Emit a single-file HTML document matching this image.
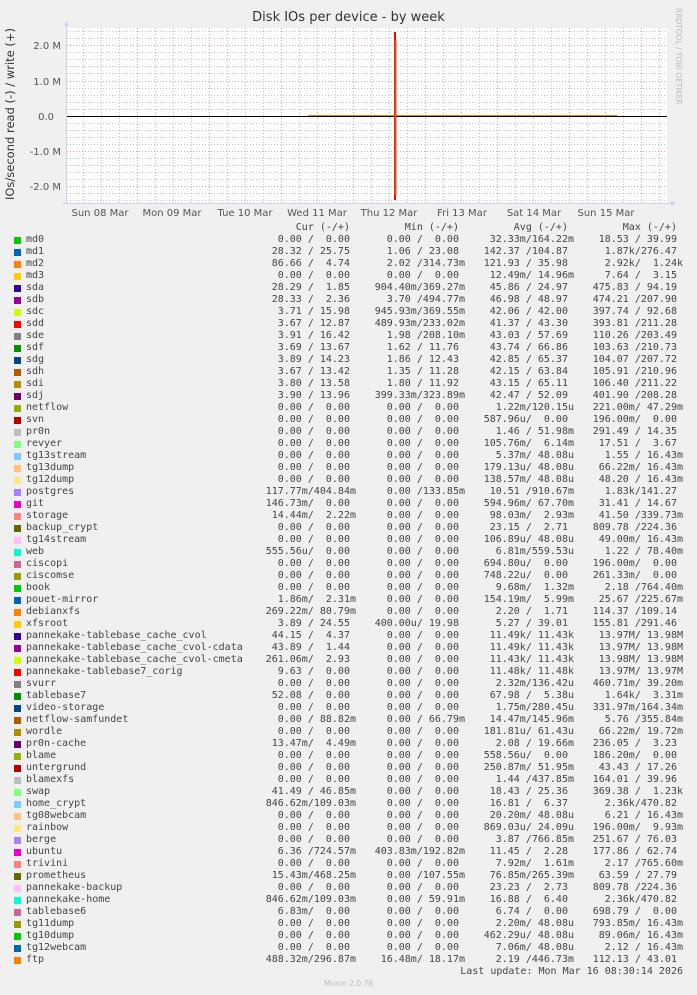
<!DOCTYPE html>
<html><head><meta charset="utf-8"><style>
body{margin:0;width:697px;height:995px;background:#f0f0f0;position:relative;overflow:hidden;font-family:"DejaVu Sans Mono","Liberation Mono",monospace;}
.t{position:absolute;font-family:"DejaVu Sans","Liberation Sans",sans-serif;color:#444}
.r{position:absolute;left:0;height:12px;width:697px;font-size:10px;line-height:12px;color:#444;white-space:pre}
.r i{position:absolute;left:14px;top:3px;width:7px;height:7px}
.r b{position:absolute;left:26px;font-weight:normal}
.r s{position:absolute;text-decoration:none;width:100px;text-align:right}
.a{left:256px}.b{left:365px}.c{left:474px}.d{left:583px}
</style></head><body>
<div class="t" style="left:0;width:697px;text-align:center;top:10px;font-size:13px;color:#333">Disk IOs per device - by week</div>
<div class="t" style="left:-80px;top:107px;width:180px;text-align:center;transform:rotate(-90deg);font-size:11.5px;color:#333">IOs/second read (-) / write (+)</div>
<div class="t" style="left:674px;top:8px;writing-mode:vertical-rl;font-size:7.5px;color:#bbb">RRDTOOL / TOBI OETIKER</div>
<svg width="697" height="225" style="position:absolute;left:0;top:0" font-family="DejaVu Sans,Liberation Sans,sans-serif" font-size="10" fill="#555">
<rect x="67" y="28" width="600" height="175" fill="#fff"/>
<g stroke="#c8c8c8" stroke-dasharray="1,2" stroke-width="1">
<path d="M67 31.5H667M67 38.5H667M67 52.5H667M67 59.5H667M67 66.5H667M67 73.5H667M67 88.5H667M67 95.5H667M67 102.5H667M67 109.5H667M67 123.5H667M67 130.5H667M67 137.5H667M67 144.5H667M67 158.5H667M67 165.5H667M67 172.5H667M67 179.5H667M67 193.5H667M67 200.5H667"/>
<path d="M83.5 28V203M101.5 28V203M119.5 28V203M155.5 28V203M173.5 28V203M191.5 28V203M227.5 28V203M245.5 28V203M263.5 28V203M299.5 28V203M317.5 28V203M335.5 28V203M371.5 28V203M389.5 28V203M407.5 28V203M443.5 28V203M461.5 28V203M479.5 28V203M515.5 28V203M533.5 28V203M551.5 28V203M587.5 28V203M605.5 28V203M623.5 28V203M659.5 28V203"/>
</g>
<g stroke="#e8a0a0" stroke-dasharray="1,2" stroke-width="1">
<path d="M67 45.5H667M67 81.5H667M67 151.5H667M67 186.5H667"/>
<path d="M137.5 28V203M209.5 28V203M281.5 28V203M353.5 28V203M425.5 28V203M497.5 28V203M569.5 28V203M641.5 28V203"/>
</g>
<path d="M66.5 24V204M62 203.5H671" stroke="#ccd4f0" stroke-width="1"/>
<path d="M64 26L66.5 21L69 26Z M671 201L676 203.5L671 206Z" fill="#ccd4f0"/>
<path d="M67 116.5H667" stroke="#000" stroke-width="1"/>
<path d="M308 115.5H617" stroke="#ff8000" stroke-width="1"/>
<path d="M395 32V200" stroke="#ff0000" stroke-width="2"/>
<path d="M395.5 40V195" stroke="#d05030" stroke-width="2"/>
<g text-anchor="end"><text x="61" y="49">2.0 M</text><text x="61" y="85">1.0 M</text><text x="54" y="120">0.0</text><text x="61" y="155">-1.0 M</text><text x="61" y="190">-2.0 M</text></g>
<g text-anchor="middle"><text x="100" y="216">Sun 08 Mar</text><text x="172" y="216">Mon 09 Mar</text><text x="245" y="216">Tue 10 Mar</text><text x="317" y="216">Wed 11 Mar</text><text x="389" y="216">Thu 12 Mar</text><text x="462" y="216">Fri 13 Mar</text><text x="534" y="216">Sat 14 Mar</text><text x="606" y="216">Sun 15 Mar</text></g>
</svg>
<div class="r" style="top:222px"><s class="a">Cur (-/+) </s><s class="b">Min (-/+) </s><s class="c">Avg (-/+) </s><s class="d">Max (-/+) </s></div>
<div class="r" style="top:234px"><i style="background:#00CC00"></i><b>md0</b><s class="a">0.00 /  0.00 </s><s class="b">0.00 /  0.00 </s><s class="c">32.33m/164.22m</s><s class="d">18.53 / 39.99 </s></div>
<div class="r" style="top:246px"><i style="background:#0066B3"></i><b>md1</b><s class="a">28.32 / 25.75 </s><s class="b">1.06 / 23.08 </s><s class="c">142.37 /104.87 </s><s class="d">1.87k/276.47 </s></div>
<div class="r" style="top:258px"><i style="background:#FF8000"></i><b>md2</b><s class="a">86.66 /  4.74 </s><s class="b">2.02 /314.73m</s><s class="c">121.93 / 35.98 </s><s class="d">2.92k/  1.24k</s></div>
<div class="r" style="top:270px"><i style="background:#FFCC00"></i><b>md3</b><s class="a">0.00 /  0.00 </s><s class="b">0.00 /  0.00 </s><s class="c">12.49m/ 14.96m</s><s class="d">7.64 /  3.15 </s></div>
<div class="r" style="top:282px"><i style="background:#330099"></i><b>sda</b><s class="a">28.29 /  1.85 </s><s class="b">904.40m/369.27m</s><s class="c">45.86 / 24.97 </s><s class="d">475.83 / 94.19 </s></div>
<div class="r" style="top:294px"><i style="background:#990099"></i><b>sdb</b><s class="a">28.33 /  2.36 </s><s class="b">3.70 /494.77m</s><s class="c">46.98 / 48.97 </s><s class="d">474.21 /207.90 </s></div>
<div class="r" style="top:306px"><i style="background:#CCFF00"></i><b>sdc</b><s class="a">3.71 / 15.98 </s><s class="b">945.93m/369.55m</s><s class="c">42.06 / 42.00 </s><s class="d">397.74 / 92.68 </s></div>
<div class="r" style="top:318px"><i style="background:#FF0000"></i><b>sdd</b><s class="a">3.67 / 12.87 </s><s class="b">489.93m/233.02m</s><s class="c">41.37 / 43.30 </s><s class="d">393.81 /211.28 </s></div>
<div class="r" style="top:330px"><i style="background:#808080"></i><b>sde</b><s class="a">3.91 / 16.42 </s><s class="b">1.98 /208.10m</s><s class="c">43.03 / 57.69 </s><s class="d">110.26 /203.49 </s></div>
<div class="r" style="top:342px"><i style="background:#008F00"></i><b>sdf</b><s class="a">3.69 / 13.67 </s><s class="b">1.62 / 11.76 </s><s class="c">43.74 / 66.86 </s><s class="d">103.63 /210.73 </s></div>
<div class="r" style="top:354px"><i style="background:#00487D"></i><b>sdg</b><s class="a">3.89 / 14.23 </s><s class="b">1.86 / 12.43 </s><s class="c">42.85 / 65.37 </s><s class="d">104.07 /207.72 </s></div>
<div class="r" style="top:366px"><i style="background:#B35A00"></i><b>sdh</b><s class="a">3.67 / 13.42 </s><s class="b">1.35 / 11.28 </s><s class="c">42.15 / 63.84 </s><s class="d">105.91 /210.96 </s></div>
<div class="r" style="top:378px"><i style="background:#B38F00"></i><b>sdi</b><s class="a">3.80 / 13.58 </s><s class="b">1.80 / 11.92 </s><s class="c">43.15 / 65.11 </s><s class="d">106.40 /211.22 </s></div>
<div class="r" style="top:390px"><i style="background:#6B006B"></i><b>sdj</b><s class="a">3.90 / 13.96 </s><s class="b">399.33m/323.89m</s><s class="c">42.47 / 52.09 </s><s class="d">401.90 /208.28 </s></div>
<div class="r" style="top:402px"><i style="background:#8FB300"></i><b>netflow</b><s class="a">0.00 /  0.00 </s><s class="b">0.00 /  0.00 </s><s class="c">1.22m/120.15u</s><s class="d">221.00m/ 47.29m</s></div>
<div class="r" style="top:414px"><i style="background:#B30000"></i><b>svn</b><s class="a">0.00 /  0.00 </s><s class="b">0.00 /  0.00 </s><s class="c">587.96u/  0.00 </s><s class="d">196.00m/  0.00 </s></div>
<div class="r" style="top:426px"><i style="background:#BEBEBE"></i><b>pr0n</b><s class="a">0.00 /  0.00 </s><s class="b">0.00 /  0.00 </s><s class="c">1.46 / 51.98m</s><s class="d">291.49 / 14.35 </s></div>
<div class="r" style="top:438px"><i style="background:#80FF80"></i><b>revyer</b><s class="a">0.00 /  0.00 </s><s class="b">0.00 /  0.00 </s><s class="c">105.76m/  6.14m</s><s class="d">17.51 /  3.67 </s></div>
<div class="r" style="top:450px"><i style="background:#80C9FF"></i><b>tg13stream</b><s class="a">0.00 /  0.00 </s><s class="b">0.00 /  0.00 </s><s class="c">5.37m/ 48.08u</s><s class="d">1.55 / 16.43m</s></div>
<div class="r" style="top:462px"><i style="background:#FFC080"></i><b>tg13dump</b><s class="a">0.00 /  0.00 </s><s class="b">0.00 /  0.00 </s><s class="c">179.13u/ 48.08u</s><s class="d">66.22m/ 16.43m</s></div>
<div class="r" style="top:474px"><i style="background:#FFE680"></i><b>tg12dump</b><s class="a">0.00 /  0.00 </s><s class="b">0.00 /  0.00 </s><s class="c">138.57m/ 48.08u</s><s class="d">48.20 / 16.43m</s></div>
<div class="r" style="top:486px"><i style="background:#AA80FF"></i><b>postgres</b><s class="a">117.77m/404.84m</s><s class="b">0.00 /133.85m</s><s class="c">10.51 /910.67m</s><s class="d">1.83k/141.27 </s></div>
<div class="r" style="top:498px"><i style="background:#EE00CC"></i><b>git</b><s class="a">146.73m/  0.00 </s><s class="b">0.00 /  0.00 </s><s class="c">594.96m/ 67.70m</s><s class="d">31.41 / 14.67 </s></div>
<div class="r" style="top:510px"><i style="background:#FF8080"></i><b>storage</b><s class="a">14.44m/  2.22m</s><s class="b">0.00 /  0.00 </s><s class="c">98.03m/  2.93m</s><s class="d">41.50 /339.73m</s></div>
<div class="r" style="top:522px"><i style="background:#666600"></i><b>backup_crypt</b><s class="a">0.00 /  0.00 </s><s class="b">0.00 /  0.00 </s><s class="c">23.15 /  2.71 </s><s class="d">809.78 /224.36 </s></div>
<div class="r" style="top:534px"><i style="background:#FFBFFF"></i><b>tg14stream</b><s class="a">0.00 /  0.00 </s><s class="b">0.00 /  0.00 </s><s class="c">106.89u/ 48.08u</s><s class="d">49.00m/ 16.43m</s></div>
<div class="r" style="top:546px"><i style="background:#00FFCC"></i><b>web</b><s class="a">555.56u/  0.00 </s><s class="b">0.00 /  0.00 </s><s class="c">6.81m/559.53u</s><s class="d">1.22 / 78.40m</s></div>
<div class="r" style="top:558px"><i style="background:#CC6699"></i><b>ciscopi</b><s class="a">0.00 /  0.00 </s><s class="b">0.00 /  0.00 </s><s class="c">694.80u/  0.00 </s><s class="d">196.00m/  0.00 </s></div>
<div class="r" style="top:570px"><i style="background:#999900"></i><b>ciscomse</b><s class="a">0.00 /  0.00 </s><s class="b">0.00 /  0.00 </s><s class="c">748.22u/  0.00 </s><s class="d">261.33m/  0.00 </s></div>
<div class="r" style="top:582px"><i style="background:#00CC00"></i><b>book</b><s class="a">0.00 /  0.00 </s><s class="b">0.00 /  0.00 </s><s class="c">9.68m/  1.32m</s><s class="d">2.18 /764.40m</s></div>
<div class="r" style="top:594px"><i style="background:#0066B3"></i><b>pouet-mirror</b><s class="a">1.86m/  2.31m</s><s class="b">0.00 /  0.00 </s><s class="c">154.19m/  5.99m</s><s class="d">25.67 /225.67m</s></div>
<div class="r" style="top:606px"><i style="background:#FF8000"></i><b>debianxfs</b><s class="a">269.22m/ 80.79m</s><s class="b">0.00 /  0.00 </s><s class="c">2.20 /  1.71 </s><s class="d">114.37 /109.14 </s></div>
<div class="r" style="top:618px"><i style="background:#FFCC00"></i><b>xfsroot</b><s class="a">3.89 / 24.55 </s><s class="b">400.00u/ 19.98 </s><s class="c">5.27 / 39.01 </s><s class="d">155.81 /291.46 </s></div>
<div class="r" style="top:630px"><i style="background:#330099"></i><b>pannekake-tablebase_cache_cvol</b><s class="a">44.15 /  4.37 </s><s class="b">0.00 /  0.00 </s><s class="c">11.49k/ 11.43k</s><s class="d">13.97M/ 13.98M</s></div>
<div class="r" style="top:642px"><i style="background:#990099"></i><b>pannekake-tablebase_cache_cvol-cdata</b><s class="a">43.89 /  1.44 </s><s class="b">0.00 /  0.00 </s><s class="c">11.49k/ 11.43k</s><s class="d">13.97M/ 13.98M</s></div>
<div class="r" style="top:654px"><i style="background:#CCFF00"></i><b>pannekake-tablebase_cache_cvol-cmeta</b><s class="a">261.06m/  2.93 </s><s class="b">0.00 /  0.00 </s><s class="c">11.43k/ 11.43k</s><s class="d">13.98M/ 13.98M</s></div>
<div class="r" style="top:666px"><i style="background:#FF0000"></i><b>pannekake-tablebase7_corig</b><s class="a">9.63 /  0.00 </s><s class="b">0.00 /  0.00 </s><s class="c">11.48k/ 11.48k</s><s class="d">13.97M/ 13.97M</s></div>
<div class="r" style="top:678px"><i style="background:#808080"></i><b>svurr</b><s class="a">0.00 /  0.00 </s><s class="b">0.00 /  0.00 </s><s class="c">2.32m/136.42u</s><s class="d">460.71m/ 39.20m</s></div>
<div class="r" style="top:690px"><i style="background:#008F00"></i><b>tablebase7</b><s class="a">52.08 /  0.00 </s><s class="b">0.00 /  0.00 </s><s class="c">67.98 /  5.38u</s><s class="d">1.64k/  3.31m</s></div>
<div class="r" style="top:702px"><i style="background:#00487D"></i><b>video-storage</b><s class="a">0.00 /  0.00 </s><s class="b">0.00 /  0.00 </s><s class="c">1.75m/280.45u</s><s class="d">331.97m/164.34m</s></div>
<div class="r" style="top:714px"><i style="background:#B35A00"></i><b>netflow-samfundet</b><s class="a">0.00 / 88.82m</s><s class="b">0.00 / 66.79m</s><s class="c">14.47m/145.96m</s><s class="d">5.76 /355.84m</s></div>
<div class="r" style="top:726px"><i style="background:#B38F00"></i><b>wordle</b><s class="a">0.00 /  0.00 </s><s class="b">0.00 /  0.00 </s><s class="c">181.81u/ 61.43u</s><s class="d">66.22m/ 19.72m</s></div>
<div class="r" style="top:738px"><i style="background:#6B006B"></i><b>pr0n-cache</b><s class="a">13.47m/  4.49m</s><s class="b">0.00 /  0.00 </s><s class="c">2.08 / 19.66m</s><s class="d">236.05 /  3.23 </s></div>
<div class="r" style="top:750px"><i style="background:#8FB300"></i><b>blame</b><s class="a">0.00 /  0.00 </s><s class="b">0.00 /  0.00 </s><s class="c">558.56u/  0.00 </s><s class="d">186.20m/  0.00 </s></div>
<div class="r" style="top:762px"><i style="background:#B30000"></i><b>untergrund</b><s class="a">0.00 /  0.00 </s><s class="b">0.00 /  0.00 </s><s class="c">250.87m/ 51.95m</s><s class="d">43.43 / 17.26 </s></div>
<div class="r" style="top:774px"><i style="background:#BEBEBE"></i><b>blamexfs</b><s class="a">0.00 /  0.00 </s><s class="b">0.00 /  0.00 </s><s class="c">1.44 /437.85m</s><s class="d">164.01 / 39.96 </s></div>
<div class="r" style="top:786px"><i style="background:#80FF80"></i><b>swap</b><s class="a">41.49 / 46.85m</s><s class="b">0.00 /  0.00 </s><s class="c">18.43 / 25.36 </s><s class="d">369.38 /  1.23k</s></div>
<div class="r" style="top:798px"><i style="background:#80C9FF"></i><b>home_crypt</b><s class="a">846.62m/109.03m</s><s class="b">0.00 /  0.00 </s><s class="c">16.81 /  6.37 </s><s class="d">2.36k/470.82 </s></div>
<div class="r" style="top:810px"><i style="background:#FFC080"></i><b>tg08webcam</b><s class="a">0.00 /  0.00 </s><s class="b">0.00 /  0.00 </s><s class="c">20.20m/ 48.08u</s><s class="d">6.21 / 16.43m</s></div>
<div class="r" style="top:822px"><i style="background:#FFE680"></i><b>rainbow</b><s class="a">0.00 /  0.00 </s><s class="b">0.00 /  0.00 </s><s class="c">869.03u/ 24.09u</s><s class="d">196.00m/  9.93m</s></div>
<div class="r" style="top:834px"><i style="background:#AA80FF"></i><b>berge</b><s class="a">0.00 /  0.00 </s><s class="b">0.00 /  0.00 </s><s class="c">3.87 /766.85m</s><s class="d">251.67 / 76.03 </s></div>
<div class="r" style="top:846px"><i style="background:#EE00CC"></i><b>ubuntu</b><s class="a">6.36 /724.57m</s><s class="b">403.83m/192.82m</s><s class="c">11.45 /  2.28 </s><s class="d">177.86 / 62.74 </s></div>
<div class="r" style="top:858px"><i style="background:#FF8080"></i><b>trivini</b><s class="a">0.00 /  0.00 </s><s class="b">0.00 /  0.00 </s><s class="c">7.92m/  1.61m</s><s class="d">2.17 /765.60m</s></div>
<div class="r" style="top:870px"><i style="background:#666600"></i><b>prometheus</b><s class="a">15.43m/468.25m</s><s class="b">0.00 /107.55m</s><s class="c">76.85m/265.39m</s><s class="d">63.59 / 27.79 </s></div>
<div class="r" style="top:882px"><i style="background:#FFBFFF"></i><b>pannekake-backup</b><s class="a">0.00 /  0.00 </s><s class="b">0.00 /  0.00 </s><s class="c">23.23 /  2.73 </s><s class="d">809.78 /224.36 </s></div>
<div class="r" style="top:894px"><i style="background:#00FFCC"></i><b>pannekake-home</b><s class="a">846.62m/109.03m</s><s class="b">0.00 / 59.91m</s><s class="c">16.88 /  6.40 </s><s class="d">2.36k/470.82 </s></div>
<div class="r" style="top:906px"><i style="background:#CC6699"></i><b>tablebase6</b><s class="a">6.83m/  0.00 </s><s class="b">0.00 /  0.00 </s><s class="c">6.74 /  0.00 </s><s class="d">698.79 /  0.00 </s></div>
<div class="r" style="top:918px"><i style="background:#999900"></i><b>tg11dump</b><s class="a">0.00 /  0.00 </s><s class="b">0.00 /  0.00 </s><s class="c">2.20m/ 48.08u</s><s class="d">793.85m/ 16.43m</s></div>
<div class="r" style="top:930px"><i style="background:#00CC00"></i><b>tg10dump</b><s class="a">0.00 /  0.00 </s><s class="b">0.00 /  0.00 </s><s class="c">462.29u/ 48.08u</s><s class="d">89.06m/ 16.43m</s></div>
<div class="r" style="top:942px"><i style="background:#0066B3"></i><b>tg12webcam</b><s class="a">0.00 /  0.00 </s><s class="b">0.00 /  0.00 </s><s class="c">7.06m/ 48.08u</s><s class="d">2.12 / 16.43m</s></div>
<div class="r" style="top:954px"><i style="background:#FF8000"></i><b>ftp</b><s class="a">488.32m/296.87m</s><s class="b">16.48m/ 18.17m</s><s class="c">2.19 /446.73m</s><s class="d">112.13 / 43.01 </s></div>
<div class="r" style="top:966px"><s style="left:400px;width:283px">Last update: Mon Mar 16 08:30:14 2026</s></div>
<div class="t" style="left:0;width:697px;text-align:center;top:979px;font-size:7.5px;color:#bbb">Munin 2.0.76</div>
</body></html>
